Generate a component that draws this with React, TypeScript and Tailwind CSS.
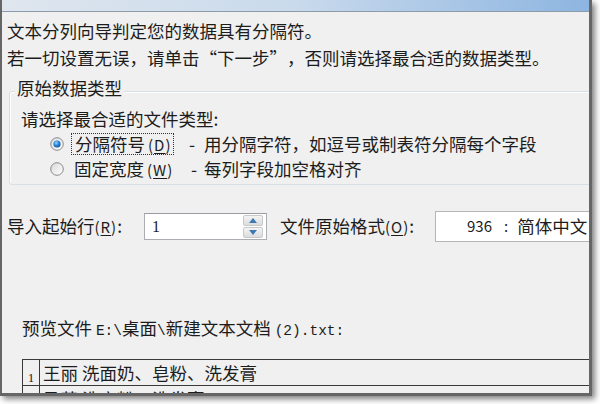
import React from "react";

function Radio({ checked }: { checked: boolean }) {
	return (
		<svg width="14" height="14" viewBox="0 0 14 14" className="shrink-0">
			<defs>
				<linearGradient id={checked ? "rg1" : "rg0"} x1="0" y1="0" x2="1" y2="1">
					<stop offset="0" stopColor="#d8d8d8" />
					<stop offset="1" stopColor="#ffffff" />
				</linearGradient>
				<radialGradient id="dot" cx="0.4" cy="0.35" r="0.7">
					<stop offset="0" stopColor="#9fd4ff" />
					<stop offset="0.45" stopColor="#2f8ee0" />
					<stop offset="1" stopColor="#0b4f9c" />
				</radialGradient>
			</defs>
			<circle cx="7" cy="7" r="6.3" fill={`url(#${checked ? "rg1" : "rg0"})`} stroke="#8a8a8a" strokeWidth="1" />
			{checked && <circle cx="7" cy="7" r="3.6" fill="url(#dot)" />}
		</svg>
	);
}

function Key({ k }: { k: string }) {
	return (
		<span className="text-[15px] tracking-[1px]">
			(<span className="underline underline-offset-2">{k}</span>)
		</span>
	);
}

export default function App() {
	return (
		<div className="w-[600px] h-[404px] bg-white overflow-hidden font-['Noto_Sans_CJK_SC',sans-serif] text-[#1c1c1c]">
			<div className="w-[592px] h-[396px] border-l-2 border-r-[3px] border-b-[3px] border-[#666666] shadow-[3px_3px_6px_rgba(0,0,0,0.5)] flex flex-col overflow-hidden">
				<div className="h-[12px] shrink-0 bg-gradient-to-r from-[#dfe6ee] via-[#c9daec] to-[#8db5e0] border-b border-[#8d9aa8]" />
				<div className="flex-1 bg-[#f0f0f0] overflow-hidden text-[17.5px]">
					<div className="pt-[5px] pl-[5px] leading-[27px] whitespace-nowrap">
						<div>文本分列向导判定您的数据具有分隔符。</div>
						<div>
							若一切设置无误，请单击<span className="inline-block w-[1em] text-right">“</span>下一步<span className="inline-block w-[1em]">”</span>，否则请选择最合适的数据类型。
						</div>
					</div>

					<div className="relative ml-[7px] mt-[20px] w-[600px] h-[94px] rounded-[3px] border border-[#d5dfe5] shadow-[inset_1px_1px_0_#ffffff]">
						<span className="absolute left-[5px] -top-[14px] px-[2px] bg-[#f0f0f0] leading-[20px]">
							原始数据类型
						</span>
						<div className="pt-[14px] pl-[11px] leading-[25px] whitespace-nowrap">
							<div>请选择最合适的文件类型:</div>
							<div className="flex items-center pl-[29px] h-[25px]">
								<Radio checked />
								<span className="shrink-0 ml-[7px] w-[103px] h-[22px] flex items-center px-[3px] border border-dotted border-[#333]">
									分隔符号<span className="ml-[3px]"><Key k="D" /></span>
								</span>
								<span className="shrink-0 ml-[15px] w-[15px]">-</span>
								<span className="shrink-0">用分隔字符，如逗号或制表符分隔每个字段</span>
							</div>
							<div className="flex items-center pl-[29px] h-[25px]">
								<Radio checked={false} />
								<span className="shrink-0 ml-[7px] w-[103px] h-[22px] flex items-center px-[2px] border border-transparent">
									固定宽度<span className="ml-[3px]"><Key k="W" /></span>
								</span>
								<span className="shrink-0 ml-[17px] w-[13px]">-</span>
								<span className="shrink-0">每列字段加空格对齐</span>
							</div>
						</div>
					</div>

					<div className="mt-[26px] h-[31px] flex items-center pl-[5px] whitespace-nowrap">
						<span className="shrink-0 w-[137px]">
							导入起始行<Key k="R" />:
						</span>
						<div className="shrink-0 w-[123px] h-[27px] flex bg-white border border-[#abadb3] border-t-[#9a9ca2]">
							<span className="flex-1 pl-[7px] leading-[25px] font-['Liberation_Serif',serif] text-[16px]">1</span>
							<div className="w-[22px] flex flex-col gap-[1px] p-[1px] mr-[2px]">
								<div className="flex-1 flex items-center justify-center bg-gradient-to-b from-[#f4f4f4] to-[#dcdcdc] border border-[#c9c9c9] rounded-[2px]">
									<svg width="8" height="5" viewBox="0 0 8 5"><path d="M0 5 L4 0 L8 5 Z" fill="#3f79b5" /></svg>
								</div>
								<div className="flex-1 flex items-center justify-center bg-gradient-to-b from-[#f4f4f4] to-[#dcdcdc] border border-[#c9c9c9] rounded-[2px]">
									<svg width="8" height="5" viewBox="0 0 8 5"><path d="M0 0 L4 5 L8 0 Z" fill="#3f79b5" /></svg>
								</div>
							</div>
						</div>
						<span className="shrink-0 ml-[13px] w-[155px]">
							文件原始格式<Key k="O" />:
						</span>
						<div className="shrink-0 w-[170px] h-[31px] flex items-center bg-white border border-[#b5b5b5] pl-[31px]">
							<span className="text-[15px]">936</span>
							<span className="ml-[12px] text-[15px]">:</span>
							<span className="ml-[9px]">简体中文</span>
						</div>
					</div>

					<div className="mt-[74px] pl-[20px] leading-[24px] whitespace-nowrap">
						预览文件 <span className="font-['Liberation_Mono',monospace] text-[14.5px] font-medium">E:\</span>桌面<span className="font-['Liberation_Mono',monospace] text-[14.5px] font-medium">\</span>新建文本文档 <span className="font-['Liberation_Mono',monospace] text-[14.5px] font-medium">(2).txt:</span>
					</div>

					<div className="mt-[16px] ml-[20px] w-[600px] border-t border-l border-[#3a3a3a] whitespace-nowrap">
						<div className="h-[26px] flex border-b border-[#3a3a3a]">
							<span className="w-[17px] border-r border-[#3a3a3a] flex items-end justify-center pb-[1px] font-['Liberation_Serif',serif] text-[13px] leading-[13px]">1</span>
							<span className="pl-[3px] leading-[26px]">王丽 洗面奶、皂粉、洗发膏</span>
						</div>
						<div className="h-[26px] flex">
							<span className="w-[17px] border-r border-[#3a3a3a] flex items-end justify-center pb-[1px] font-['Liberation_Serif',serif] text-[13px] leading-[13px]">2</span>
							<span className="pl-[3px] leading-[26px]">马萌 洗衣粉、洗发膏</span>
						</div>
					</div>
				</div>
			</div>
		</div>
	);
}
